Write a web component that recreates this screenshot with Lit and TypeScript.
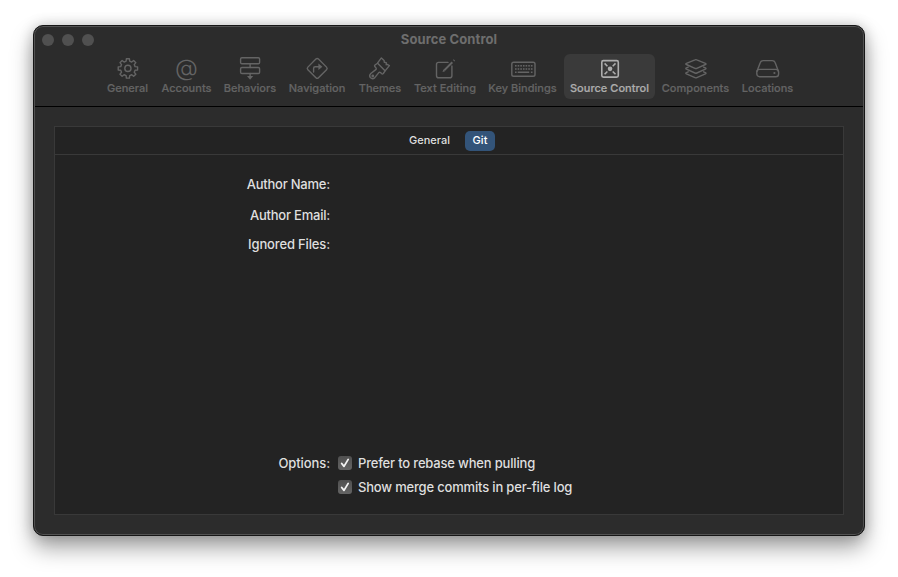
import { LitElement, html, svg, css, type SVGTemplateResult } from "lit";
import { customElement, property, state } from "lit/decorators.js";
import { classMap } from "lit/directives/class-map.js";

/** Closed outline of an eight-toothed gear around (cx, cy). */
function gearPath(cx: number, cy: number, inner: number, outer: number): string {
  const pts: string[] = [];
  const at = (r: number, deg: number) => {
    const a = (deg * Math.PI) / 180;
    return `${(cx + r * Math.sin(a)).toFixed(2)} ${(cy - r * Math.cos(a)).toFixed(2)}`;
  };
  for (let i = 0; i < 8; i++) {
    const d = i * 45;
    pts.push(at(inner, d - 14), at(outer, d - 9), at(outer, d + 9), at(inner, d + 14));
  }
  return `M${pts.join("L")}Z`;
}

const keys: SVGTemplateResult[] = [];
for (let i = 0; i < 7; i++) {
  const x = 7.0 + i * 2.65;
  keys.push(svg`<rect class="solid" x=${x} y="9" width="1.6" height="1.6" />`);
  keys.push(svg`<rect class="solid" x=${x} y="12.2" width="1.6" height="1.6" />`);
}

const icons: Record<string, SVGTemplateResult> = {
  gear: svg`<path d=${gearPath(14.9, 12.4, 7.4, 9.8)} /><circle cx="14.9" cy="12.4" r="3.1" />`,
  at: svg`<text class="at" x="14.4" y="19.6" text-anchor="middle">@</text>`,
  behaviors: svg`
    <rect x="5.6" y="1.7" width="19" height="6" rx="1.3" />
    <rect x="5.6" y="11.5" width="19" height="6" rx="1.3" />
    <path d="M15.1 7.7v3.8M15.1 17.5v3" />
    <path class="solid" d="M12 20h6.2l-3.1 3.8z" />`,
  navigation: svg`
    <rect x="7.7" y="4.9" width="15" height="15" rx="1.8" transform="rotate(45 15.2 12.4)" />
    <path d="M11.6 16v-3.6q0-1.6 1.6-1.6h3.6" />
    <path class="solid" d="M16.4 7.5l4 3.3-4 3.3z" />`,
  brush: svg`
    <path d="M16.4 1.9q-2.6 3.3-3.9 5.3L10 9q-.9.8 0 1.8l1 1.1q.7 1-.2 1.7l-5 3.9q-2 1.9-.5 4.1q2.1 2.1 4.3.3l4.2-5.3q.8-.8 1.7 0l1 1q.9.8 1.8-.1l1.8-2.6L24.4 9.6l-2.2-1.2-1 .3.1-2.1-2-.4-.2-1.8z" />
    <path d="M12.6 7.3l7.4 7.4" /><circle cx="7.8" cy="20" r=".7" />`,
  edit: svg`
    <path d="M18 6.4H8.6q-2.1 0-2.1 2.1v11.2q0 2.1 2.1 2.1h11.2q2.1 0 2.1-2.1V10" />
    <path class="pencil" d="M14.2 14.4L22.3 6.2" />
    <path class="solid" d="M12.5 16.1l.9-2.6 1.7 1.7z" />
    <path class="pencil" d="M23.7 4.7l.7-.7" />`,
  keyboard: svg`
    <rect x="3.8" y="6.2" width="23.2" height="14.1" rx="1.8" />${keys}
    <path class="solid" d="M7 15.5h1.6v1.6H7zM9.7 15.5h11.5v1.6H9.7zM22.9 15.5h1.6v1.6h-1.6z" />`,
  source: svg`
    <rect class="bold" x="6.8" y="4.6" width="16.5" height="16.5" rx="1.6" />
    <circle class="solid" cx="15.05" cy="12.85" r="2.3" />
    <path class="bold" d="M9.6 7.4l2.8 2.8M20.5 7.4L17.7 10.2M9.6 18.3l2.8-2.8M20.5 18.3L17.7 15.5" />`,
  layers: svg`
    <path d="M14 3.8q.9-.4 1.8 0l8.6 3.5q1.2.6 0 1.2L15.8 12.3q-.9.4-1.8 0L5.4 8.5q-1.2-.6 0-1.2z" />
    <path d="M7.2 11.1l-1.8.8q-1.2.6 0 1.2l8.6 3.9q.9.4 1.8 0l8.6-3.9q1.2-.6 0-1.2l-1.8-.8" />
    <path d="M7.2 15.8l-1.8.8q-1.2.6 0 1.2l8.6 3.9q.9.4 1.8 0l8.6-3.9q1.2-.6 0-1.2l-1.8-.8" />`,
  drive: svg`
    <path d="M4 15.3L7.3 6.6q.7-2 2.8-2h9.2q2.1 0 2.8 2l3.3 8.7" />
    <rect x="3.8" y="13.4" width="21.8" height="7.3" rx="2.8" />
    <circle class="solid" cx="21.4" cy="17" r="1.1" />`,
};

@customElement("toolbar-item")
class ToolbarItem extends LitElement {
  @property() icon = "";
  @property() label = "";
  @property({ type: Boolean }) selected = false;

  static styles = css`
    :host { display: block; }
    .item {
      height: 43px;
      padding-top: 2px;
      display: flex;
      flex-direction: column;
      align-items: center;
      border-radius: 6px;
      color: #646464;
    }
    .item.selected { background: #3a3a3a; color: #adadad; }
    svg {
      flex: none;
      overflow: visible;
      fill: none;
      stroke: currentColor;
      stroke-width: 1.4;
      stroke-linejoin: round;
      stroke-linecap: round;
    }
    .solid { fill: currentColor; stroke: none; }
    .bold { stroke-width: 1.6; stroke-linecap: butt; }
    .pencil { stroke-width: 2; stroke-linecap: butt; }
    .at { font: 300 23.5px Inter, sans-serif; fill: currentColor; stroke: none; }
    .label {
      font: 500 11px/14px Inter, "Liberation Sans", sans-serif;
      letter-spacing: 0.03px;
      white-space: nowrap;
      -webkit-text-stroke: 0.2px currentColor;
    }
  `;

  render() {
    return html`<div class=${classMap({ item: true, selected: this.selected })}>
      <svg width="30" height="25" viewBox="0 0 30 25">${icons[this.icon]}</svg>
      <span class="label">${this.label}</span>
    </div>`;
  }
}

@customElement("check-option")
class CheckOption extends LitElement {
  @property() label = "";

  static styles = css`
    :host { display: flex; align-items: center; height: 24px; gap: 6px; }
    .box {
      width: 14px;
      height: 14px;
      border-radius: 3px;
      background: linear-gradient(#505050, #646464);
    }
    svg { display: block; fill: none; stroke: #f4f4f4; stroke-width: 1.8; stroke-linecap: round; stroke-linejoin: round; }
    .text { white-space: nowrap; letter-spacing: -0.18px; }
  `;

  render() {
    return html`<span class="box">
        <svg width="14" height="14" viewBox="0 0 14 14"><path d="M3.7 7.5l2.3 2.9 4.2-7" /></svg>
      </span>
      <span class="text">${this.label}</span>`;
  }
}

@customElement("app-root")
class AppRoot extends LitElement {
  @state() private section = "Source Control";
  @state() private tab = "Git";

  private readonly items = [
    ["General", "gear"],
    ["Accounts", "at"],
    ["Behaviors", "behaviors"],
    ["Navigation", "navigation"],
    ["Themes", "brush"],
    ["Text Editing", "edit"],
    ["Key Bindings", "keyboard"],
    ["Source Control", "source"],
    ["Components", "layers"],
    ["Locations", "drive"],
  ];

  static styles = css`
    :host {
      display: block;
      box-sizing: border-box;
      width: 898px;
      height: 577px;
      padding: 25px 33px 41px;
      overflow: hidden;
      background: #fff;
      font: 500 13px/16px Inter, "Liberation Sans", sans-serif;
    }
    .window {
      box-sizing: border-box;
      width: 832px;
      height: 511px;
      border: 1px solid #161616;
      border-radius: 10px;
      background: #2c2c2c;
      box-shadow: inset 0 0 0 1px #525252,
        0 12px 22px rgba(0, 0, 0, 0.36), 0 0 14px rgba(0, 0, 0, 0.2);
    }
    .head { box-sizing: border-box; height: 81px; border-bottom: 1px solid #000; margin: 0 1px; }
    .titlebar { display: grid; grid-template-columns: 1fr auto 1fr; align-items: center; height: 28px; }
    .lights { display: flex; gap: 8px; padding-left: 7px; }
    .light { width: 12px; height: 12px; border-radius: 50%; background: #505050; }
    .title { font-weight: 700; letter-spacing: 0.1px; color: #6e6e6e; padding-bottom: 2px; }
    .toolbar {
      display: grid;
      grid-template-columns: 53px 61px 62px 68px 54px 72px 79px 91px 77px 63px;
      column-gap: 2px;
      padding-left: 66px;
    }
    .panel {
      box-sizing: border-box;
      width: 790px;
      height: 389px;
      margin: 19px 0 0 20px;
      border: 1px solid #393939;
      background: #232323;
      color: #dfdfdf;
    }
    .tabs {
      box-sizing: border-box;
      height: 28px;
      border-bottom: 1px solid #393939;
      display: flex;
      align-items: center;
      justify-content: center;
      gap: 7px;
      padding-right: 2px;
      font-size: 11px;
      line-height: 18px;
      letter-spacing: 0.03px;
    }
    .tab { box-sizing: border-box; height: 20px; text-align: center; border-radius: 5px; width: 57px; }
    .tab.active { background: #335479; color: #fff; width: 30px; }
    .form { display: grid; grid-template-columns: 275px auto; column-gap: 8px; grid-template-rows: 31px 31px 28px 192px 24px 24px; padding-top: 14px; }
    .caption { text-align: right; line-height: 31px; letter-spacing: -0.22px; }
    .caption.low { line-height: 26px; letter-spacing: -0.15px; }
    .caption.options { grid-row: 5; line-height: 24px; letter-spacing: -0.1px; }
    .options-list { grid-row: 5 / 7; grid-column: 2; }
  `;

  render() {
    return html`<div class="window">
      <div class="head">
        <div class="titlebar">
          <div class="lights"><i class="light"></i><i class="light"></i><i class="light"></i></div>
          <div class="title">Source Control</div>
        </div>
        <div class="toolbar">
          ${this.items.map(
            ([label, icon]) => html`<toolbar-item
              label=${label}
              icon=${icon}
              ?selected=${label === this.section}
              @click=${() => (this.section = label)}
            ></toolbar-item>`
          )}
        </div>
      </div>
      <div class="panel">
        <div class="tabs">
          ${["General", "Git"].map(
            (t) => html`<span
              class=${classMap({ tab: true, active: t === this.tab })}
              @click=${() => (this.tab = t)}
              >${t}</span
            >`
          )}
        </div>
        <div class="form">
          <div class="caption">Author Name:</div><div></div>
          <div class="caption">Author Email:</div><div></div>
          <div class="caption low">Ignored Files:</div><div></div>
          <div class="caption options">Options:</div>
          <div class="options-list">
            <check-option label="Prefer to rebase when pulling"></check-option>
            <check-option label="Show merge commits in per-file log"></check-option>
          </div>
        </div>
      </div>
    </div>`;
  }
}
